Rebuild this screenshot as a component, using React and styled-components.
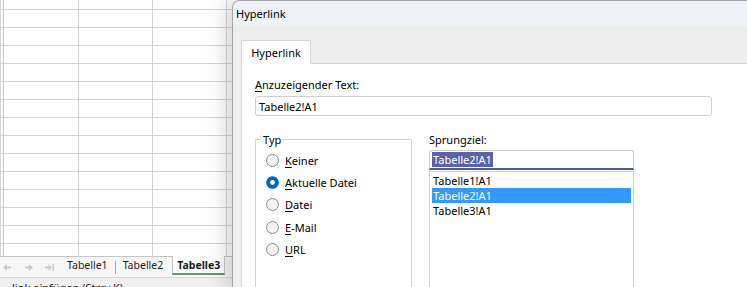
import React from 'react';
import styled, { createGlobalStyle } from 'styled-components';

//#region --- Styled Components ---
const GlobalStyle = createGlobalStyle`
  html, body {
    margin: 0;
    padding: 0;
  }
  body {
    width: 747px;
    height: 287px;
    overflow: hidden;
    background: #fff;
    font-family: "Noto Sans", "Open Sans", sans-serif;
    font-size: 11px;
    color: #000;
  }
`;

const Screen = styled.div`
  display: flex;
  width: 747px;
  height: 287px;
  overflow: hidden;
`;

// --- spreadsheet behind the dialog ---
const SheetPane = styled.div`
  flex: 0 0 232px;
  display: flex;
  flex-direction: column;
`;

const Cells = styled.div`
  flex: 0 0 256px;
  background-color: #fff;
  background-image:
    linear-gradient(to right,
      #d8d8d8 0 1px, transparent 1px 3px,
      #c4c4c4 3px 4px, transparent 4px 78px,
      #d4d4d4 78px 79px, transparent 79px 152px,
      #d4d4d4 152px 153px, transparent 153px 226px,
      #d4d4d4 226px 227px, transparent 227px),
    repeating-linear-gradient(to bottom,
      transparent 0 9px, #d4d4d4 9px 10px, transparent 10px 18px);
`;

const TabBar = styled.div`
  flex: 0 0 20px;
  display: flex;
  align-items: stretch;
  border-top: 1px solid #c4c4c4;
  background: #f7f7f7;
`;

const NavButtons = styled.div`
  flex: 0 0 60px;
  display: flex;
  align-items: center;
  gap: 12px;
  padding-left: 3px;
  box-sizing: border-box;
  color: #c9c9c9;
`;

const SheetTab = styled.div`
  display: flex;
  align-items: center;
  padding: 0 ${({ $active }) => ($active ? '4px' : '6px')};
  margin-left: ${({ $active }) => ($active ? '2px' : '0')};
  font-size: 10.5px;
  font-weight: ${({ $active }) => ($active ? 700 : 400)};
  color: #1b1b1b;
  background: ${({ $active }) => ($active ? '#fff' : 'transparent')};
  border-left: 1px solid ${({ $active }) => ($active ? '#c4c4c4' : 'transparent')};
  border-right: 1px solid ${({ $active }) => ($active ? '#c4c4c4' : 'transparent')};
  border-bottom: 2px solid ${({ $active }) => ($active ? '#5f9a67' : 'transparent')};
  margin-top: -1px;
  margin-bottom: 2px;
`;

const TabDivider = styled.div`
  align-self: center;
  width: 1px;
  height: 13px;
  background: #a8a8a8;
`;

const StatusBar = styled.div`
  flex: 1;
  background: #efefef;
  border-top: 1px solid #d8d8d8;
  padding: 2px 0 0 12px;
  font-size: 11px;
  color: #222;
  white-space: nowrap;
  overflow: hidden;
`;

// --- dialog ---
const Dialog = styled.div`
  position: relative;
  z-index: 1;
  flex: 1;
  display: flex;
  flex-direction: column;
  border-left: 1px solid #a3a3a3;
  border-top: 1px solid #a3a3a3;
  border-top-left-radius: 8px;
  background: #eeeeee;
  box-shadow: -4px 0 22px rgba(0, 0, 0, 0.2);
  overflow: hidden;
`;

const TitleBar = styled.div`
  flex: 0 0 25px;
  display: flex;
  align-items: center;
  padding-left: 3px;
  background: #eef2f7;
  font-size: 11px;
`;

const TabStrip = styled.div`
  flex: 0 0 auto;
  padding: 14px 0 0 8px;
  display: flex;
`;

const DialogTab = styled.div`
  position: relative;
  z-index: 1;
  width: 68px;
  height: 23px;
  display: flex;
  align-items: center;
  justify-content: center;
  background: #fff;
  border: 1px solid #d6d6d6;
  border-bottom: none;
  margin-bottom: -1px;
`;

const Panel = styled.div`
  flex: 1;
  min-height: 0;
  overflow: hidden;
  margin-left: 8px;
  background: #fff;
  border-top: 1px solid #d6d6d6;
  border-left: 1px solid #dcdcdc;
  padding: 13px 0 0 13px;
  line-height: 15px;
`;

const Label = styled.div`
  margin-bottom: ${({ $gap }) => $gap || '4px'};
`;

const Key = styled.span`
  text-decoration: underline;
  text-underline-offset: 2px;
`;

const TextInput = styled.div`
  width: 452px;
  height: 18px;
  display: flex;
  align-items: center;
  padding-left: 3px;
  border: 1px solid #cfcfcf;
  border-radius: 3px;
`;

const Columns = styled.div`
  display: flex;
  gap: 17px;
  margin-top: 16px;
`;

const GroupBox = styled.fieldset`
  margin: 0;
  width: 157px;
  height: 170px;
  padding: 2px 0 0 10px;
  border: 1px solid #d6d6d6;
  box-sizing: border-box;
  min-width: 0;
`;

const Legend = styled.legend`
  padding: 0 2px;
  margin-left: -5px;
  line-height: 15px;
`;

const RadioRow = styled.label`
  display: flex;
  align-items: center;
  gap: 6px;
  height: 22.4px;
`;

const TargetColumn = styled.div`
  display: flex;
  flex-direction: column;
`;

const Combo = styled.div`
  width: 201px;
  height: 17px;
  display: flex;
  align-items: center;
  padding-left: 2px;
  border: 1px solid #cfcfcf;
  border-bottom: 2px solid #4f5a98;
  border-radius: 3px 3px 0 0;
`;

const Selected = styled.span`
  background: #5b62a8;
  color: #fff;
  padding: 0 1px;
  line-height: 15px;
`;

const ListBox = styled.div`
  width: 199px;
  height: 130px;
  margin-top: 1px;
  padding: 1px 2px;
  border: 1px solid #d0d0d0;
`;

const ListItem = styled.div`
  height: 15px;
  line-height: 15px;
  padding-left: 1px;
  background: ${({ $selected }) => ($selected ? '#3399ff' : 'transparent')};
  color: ${({ $selected }) => ($selected ? '#fff' : '#000')};
`;
//#endregion

function NavArrow({ dir }) {
  return (
    <svg width="9" height="9" viewBox="0 0 9 9" fill="currentColor">
      {dir === 'left' && <path d="M0 4.5 L4 1 V3.5 H8 V5.5 H4 V8 Z" />}
      {dir === 'right' && <path d="M9 4.5 L5 1 V3.5 H1 V5.5 H5 V8 Z" />}
      {dir === 'end' && (
        <>
          <path d="M7 4.5 L3.5 1 V3.5 H0 V5.5 H3.5 V8 Z" />
          <rect x="7.5" y="1" width="1.5" height="7" />
        </>
      )}
    </svg>
  );
}

function Radio({ checked }) {
  return (
    <svg width="13" height="13" viewBox="0 0 13 13">
      {checked ? (
        <>
          <circle cx="6.5" cy="6.5" r="6.3" fill="#0067c0" />
          <circle cx="6.5" cy="6.5" r="2.4" fill="#fff" />
        </>
      ) : (
        <circle cx="6.5" cy="6.5" r="6" fill="#f3f3f3" stroke="#8a8a8a" strokeWidth="1" />
      )}
    </svg>
  );
}

const types = [
  { key: 'K', rest: 'einer' },
  { key: 'A', rest: 'ktuelle Datei', checked: true },
  { key: 'D', rest: 'atei' },
  { key: 'E', rest: '-Mail' },
  { key: 'U', rest: 'RL' },
];

const targets = ['Tabelle1!A1', 'Tabelle2!A1', 'Tabelle3!A1'];

export default function App() {
  return (
    <>
      <GlobalStyle />
      <Screen>
        <SheetPane>
          <Cells />
          <TabBar>
            <NavButtons>
              <NavArrow dir="left" />
              <NavArrow dir="right" />
              <NavArrow dir="end" />
            </NavButtons>
            <SheetTab>Tabelle1</SheetTab>
            <TabDivider />
            <SheetTab>Tabelle2</SheetTab>
            <SheetTab $active>Tabelle3</SheetTab>
          </TabBar>
          <StatusBar>link einfügen (Strg+K)</StatusBar>
        </SheetPane>

        <Dialog>
          <TitleBar>Hyperlink</TitleBar>
          <TabStrip>
            <DialogTab>Hyperlink</DialogTab>
          </TabStrip>
          <Panel>
            <Label>
              <Key>A</Key>nzuzeigender Text:
            </Label>
            <TextInput>Tabelle2!A1</TextInput>

            <Columns>
              <GroupBox>
                <Legend>Typ</Legend>
                {types.map((t) => (
                  <RadioRow key={t.key}>
                    <Radio checked={t.checked} />
                    <span>
                      <Key>{t.key}</Key>
                      {t.rest}
                    </span>
                  </RadioRow>
                ))}
              </GroupBox>

              <TargetColumn>
                <Label $gap="3px">Sprungziel:</Label>
                <Combo>
                  <Selected>Tabelle2!A1</Selected>
                </Combo>
                <ListBox>
                  {targets.map((t) => (
                    <ListItem key={t} $selected={t === 'Tabelle2!A1'}>
                      {t}
                    </ListItem>
                  ))}
                </ListBox>
              </TargetColumn>
            </Columns>
          </Panel>
        </Dialog>
      </Screen>
    </>
  );
}
